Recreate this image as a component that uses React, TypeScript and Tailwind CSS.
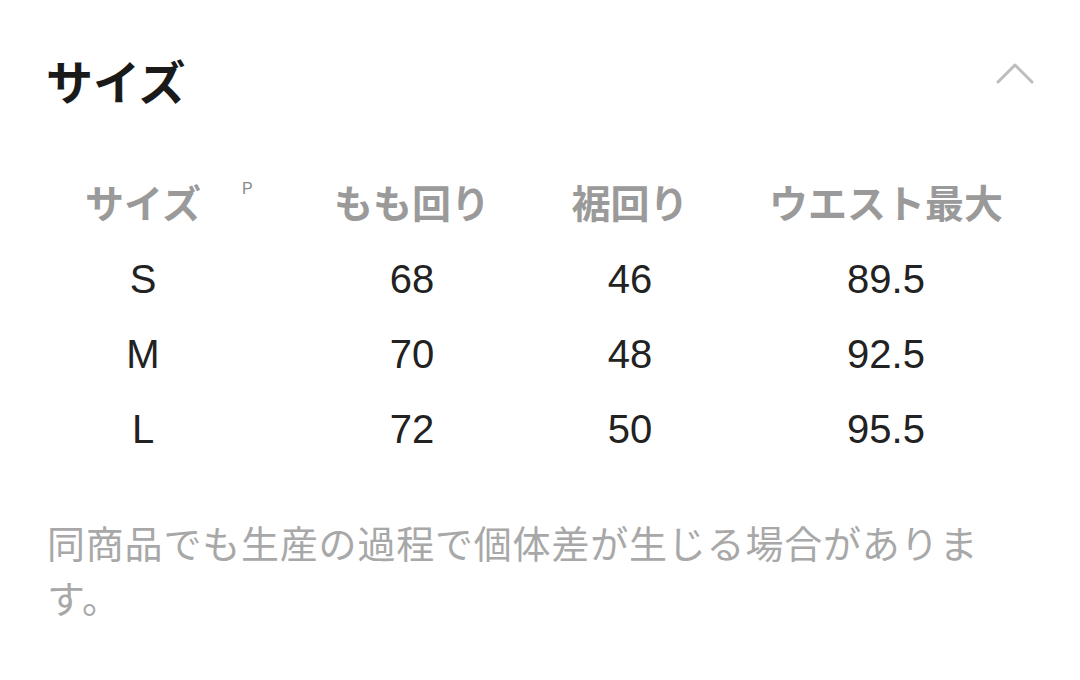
const rows = [
  { size: 'S', thigh: '68', hem: '46', waist: '89.5' },
  { size: 'M', thigh: '70', hem: '48', waist: '92.5' },
  { size: 'L', thigh: '72', hem: '50', waist: '95.5' },
];

const headers = ['サイズ', 'もも回り', '裾回り', 'ウエスト最大'];

const App: React.FC = () => {
  return (
    <div
      className="h-[680px] w-[1080px] overflow-hidden bg-white"
      style={{ fontFamily: '"Liberation Sans", "Noto Sans CJK JP", sans-serif' }}
    >
      <header className="box-content flex h-[90px] items-center justify-between px-[46px] pt-[38px]">
        <h2 className="text-[47px] font-bold leading-none text-[#1a1a1a]">サイズ</h2>
        <svg width="40" height="24" viewBox="0 0 40 24" className="mt-[-20px] mr-[-1px]">
          <path
            d="M3 21 L20 4 L37 21"
            fill="none"
            stroke="#bdbdbd"
            strokeWidth="3"
            strokeLinecap="round"
            strokeLinejoin="round"
          />
        </svg>
      </header>

      <main className="mt-[40px]">
        <div className="ml-[34px] grid grid-cols-[218px_280px_116px_356px] gap-x-5">
          {headers.map((h, i) => (
            <div
              key={h}
              className="relative flex h-[75px] items-center justify-center whitespace-nowrap text-[39px] font-bold text-[#9a9a9a]"
            >
              {h}
              {i === 0 && (
                <span className="absolute left-[208px] top-[9px] text-[16px] font-normal text-[#8a8a8a]">
                  P
                </span>
              )}
            </div>
          ))}
          {rows.map((r) => (
            <>
              <div key={r.size + 'a'} className="flex h-[75px] items-center justify-center pb-[3px] text-[40px] text-[#222]">
                {r.size}
              </div>
              <div key={r.size + 'b'} className="flex h-[75px] items-center justify-center pb-[3px] text-[40px] text-[#222]">
                {r.thigh}
              </div>
              <div key={r.size + 'c'} className="flex h-[75px] items-center justify-center pb-[3px] text-[40px] text-[#222]">
                {r.hem}
              </div>
              <div key={r.size + 'd'} className="flex h-[75px] items-center justify-center pb-[3px] text-[40px] text-[#222]">
                {r.waist}
              </div>
            </>
          ))}
        </div>

        <p className="mt-[50px] ml-[47px] w-[986px] text-[38px] leading-[55px] tracking-[0.8px] text-[#a8a8a8]">
          同商品でも生産の過程で個体差が生じる場合があります。
        </p>
      </main>
    </div>
  );
};

export default App;
